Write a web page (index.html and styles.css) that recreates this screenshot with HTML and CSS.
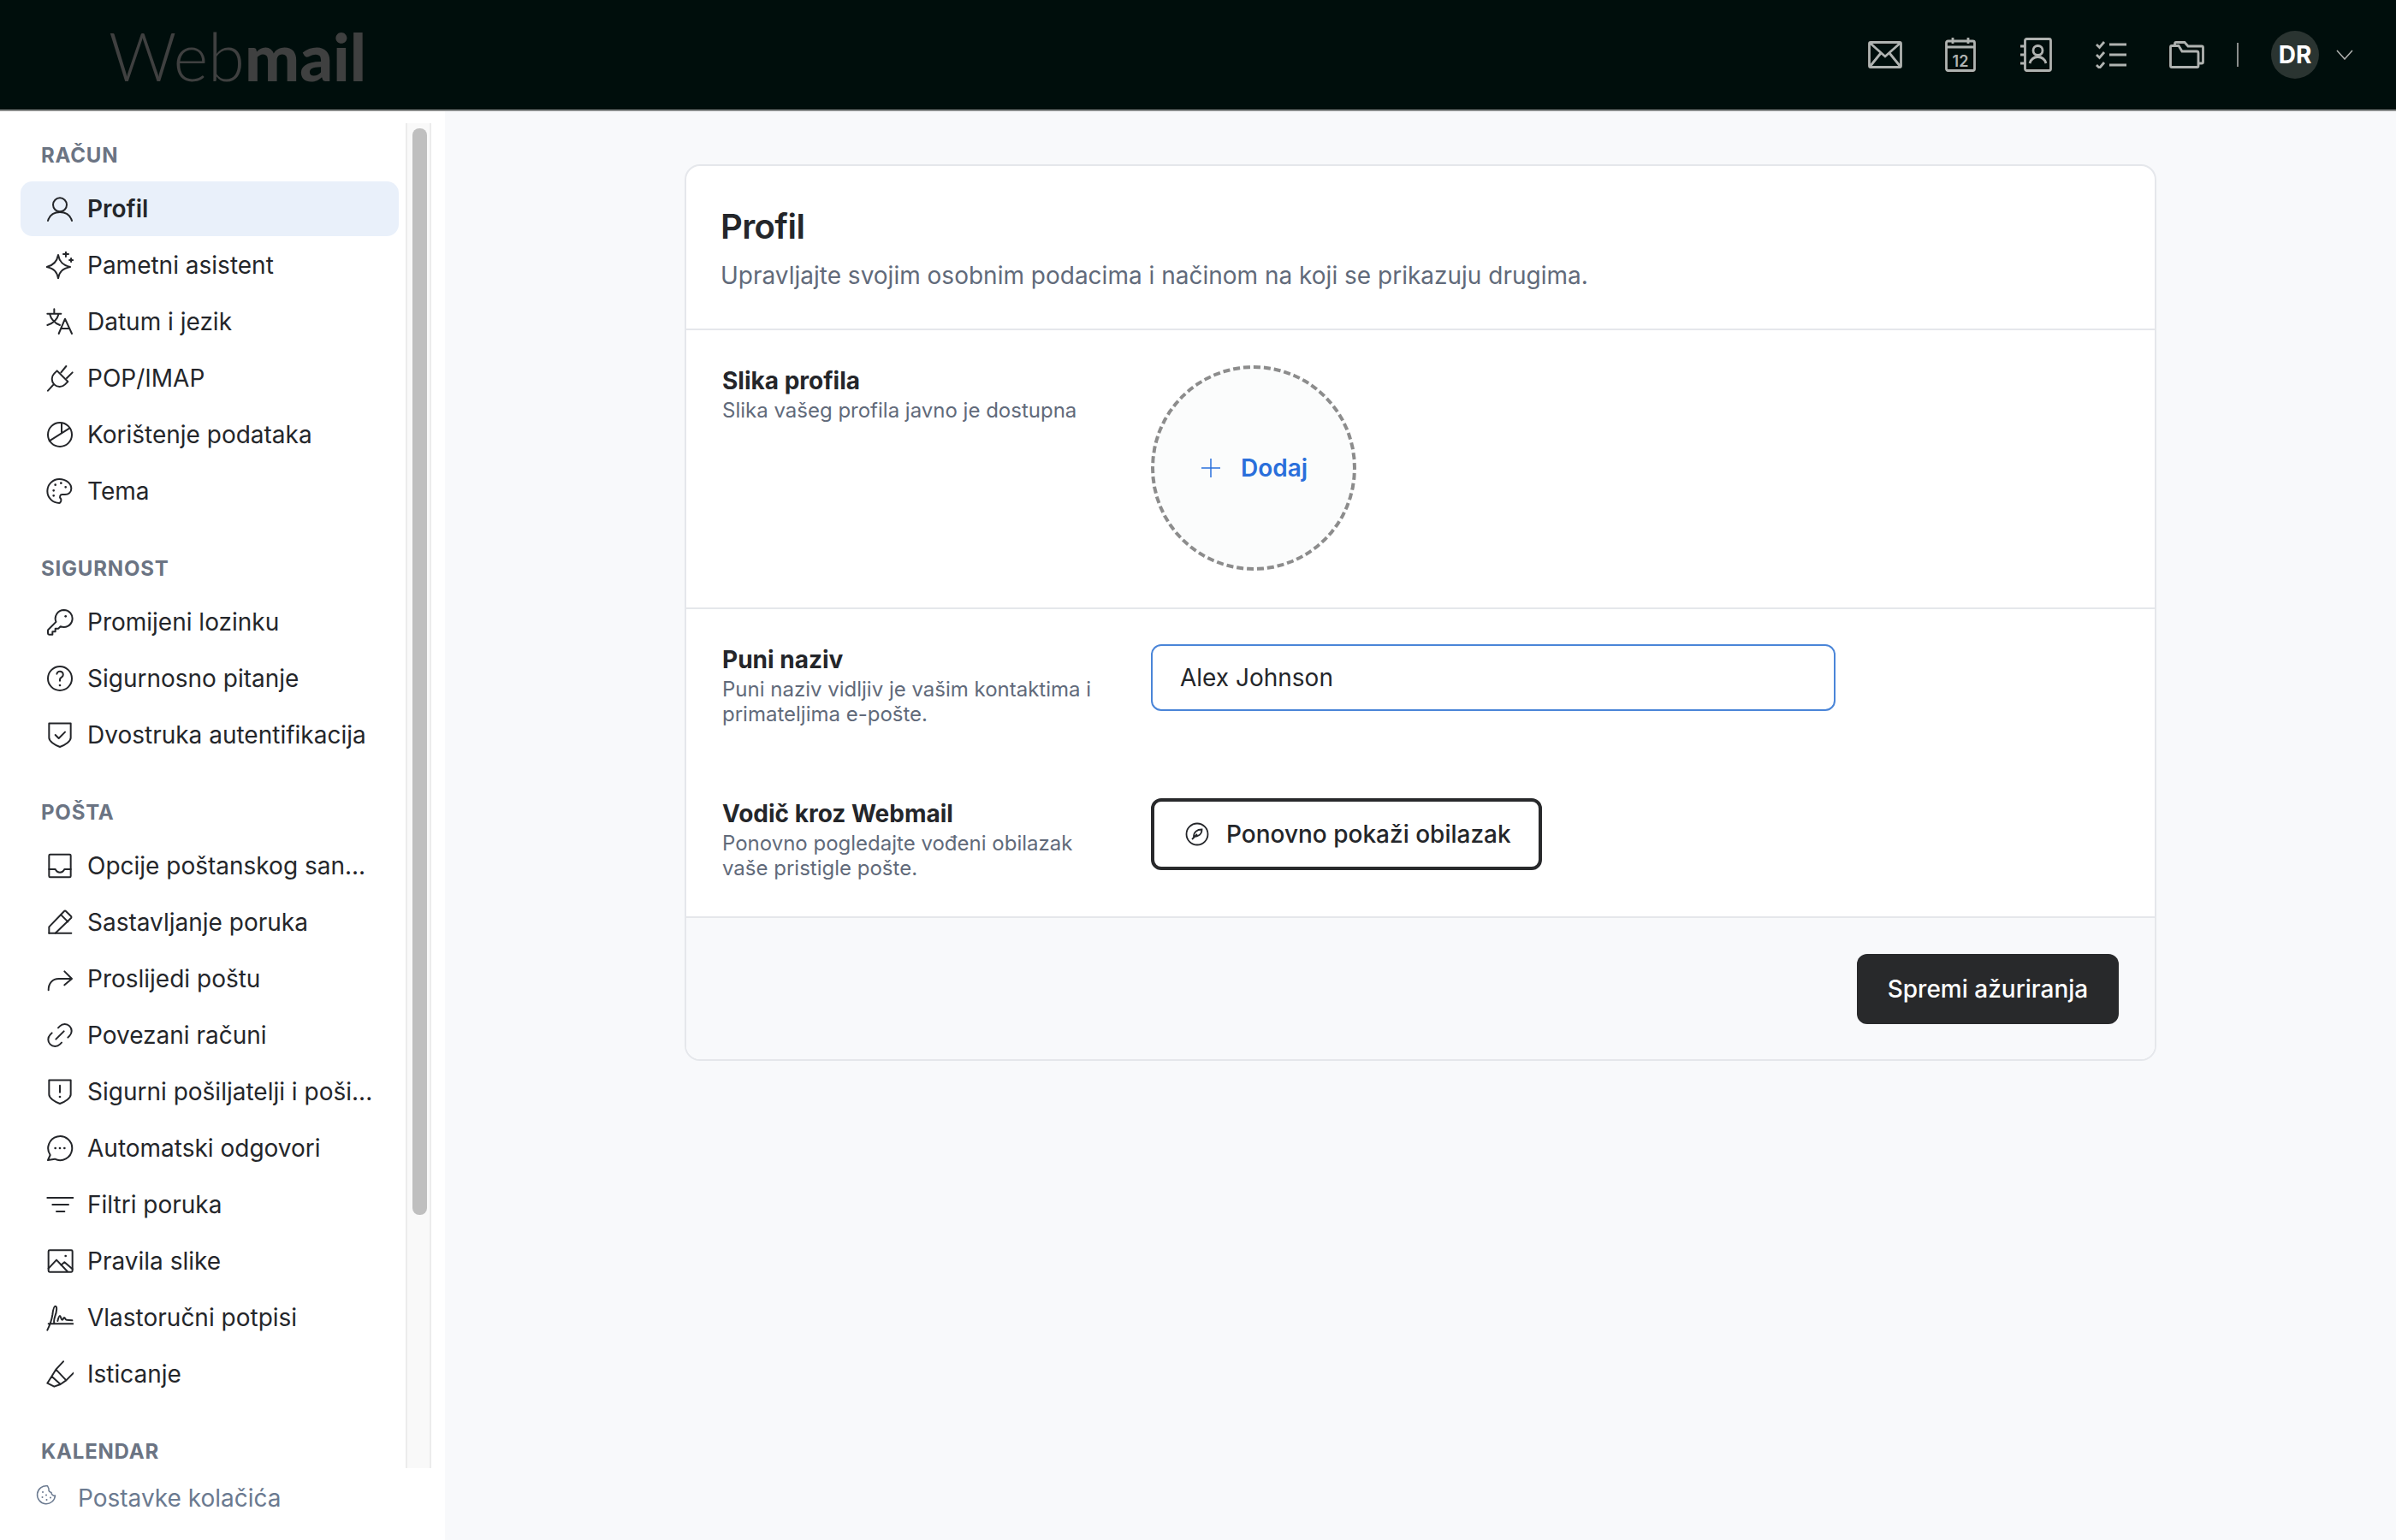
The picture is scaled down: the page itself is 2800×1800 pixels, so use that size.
FILE: index.html
```html
<!DOCTYPE html>
<html lang="hr">

<head>
  <meta charset="UTF-8">
  <title>Webmail - Profil</title>
  <link rel="stylesheet" href="styles.css">
</head>

<body>

  <header class="topbar">
    <div class="logo"><span class="logo-thin">Web</span><span class="logo-bold">mail</span></div>
    <div class="topbar-tools">
      <svg class="tool tool-mail" viewBox="0 0 40 32"><rect x="1.500" y="1.500" width="37" height="29" rx="1.500"/><path d="M2 2l18 16L38 2M2 30l13-16M38 30L25 14"/></svg>
      <svg class="tool tool-cal" viewBox="0 0 36 40"><rect x="1.500" y="4" width="33" height="34.500" rx="2"/><path d="M1.500 11h33M9 0v7M27 0v7"/><text x="18" y="33.500" class="tool-cal-text">12</text></svg>
      <svg class="tool tool-book" viewBox="0 0 38 40"><rect x="6.500" y="1.500" width="30" height="37" rx="2"/><path d="M1 10h5M1 20h5M1 30h5"/><circle cx="21.500" cy="15" r="5.500"/><path d="M12 30c1.500-5 5-7.500 9.500-7.500S29.500 25 31 30"/></svg>
      <svg class="tool tool-tasks" viewBox="0 0 36 32"><path d="M1 4l3.500 3.500L10 1M1 16l3.500 3.500L10 13M1 28l3.500 3.500L10 25"/><path d="M16 4h20M16 16h20M16 28h20"/></svg>
      <svg class="tool tool-folder" viewBox="0 0 41 32"><path d="M1.500 29V7A1.500 1.500 0 0 1 3 5.500h8l4 6.500h17a2 2 0 0 1 2 2v15a1.500 1.500 0 0 1-1.500 1.500H3A1.500 1.500 0 0 1 1.500 29z"/><path d="M6.500 5V3A1.500 1.500 0 0 1 8 1.500h10l4 4.500h16A1.500 1.500 0 0 1 39.500 7.500v17a1.500 1.500 0 0 1-1.500 1.500h-3.500"/></svg>
      <div class="topbar-divider"></div>
      <div class="avatar">DR</div>
      <svg class="tool-chevron" viewBox="0 0 20 12"><path d="M1 1l9 10 9-10"/></svg>
    </div>
  </header>

  <div class="layout">
    <aside class="sidebar">
      <div class="sidebar-body">
        <nav class="sidenav">

          <div class="nav-title">RAČUN</div>
          <ul class="nav-list">
            <li class="nav-item active">
              <svg class="icon" viewBox="0 0 24 24"><circle cx="12" cy="8.500" r="6"/><path d="M1.500 22.500c1.500-5 5-7.500 10.500-7.500s9 2.500 10.500 7.500"/></svg>
              <span>Profil</span>
            </li>
            <li class="nav-item">
              <svg class="icon" viewBox="0 0 24 24"><path d="M10.500 3c1 5.500 3.500 9 10.500 10.500-7 1.500-9.500 4.500-10.500 10-1-5.500-3.500-8.500-10-10 6.500-1.500 9-5 10-10.500z"/><path d="M17.200 0v4.500M15 2.200h4.500M21.800 6v3M20.300 7.500h3"/></svg>
              <span>Pametni asistent</span>
            </li>
            <li class="nav-item">
              <svg class="icon" viewBox="0 0 24 24"><path d="M7 1v3.500M1 5h12M3 5c1 4 4 8 9 10M11 5c-1 4-4 8-10 10M11 22.500l5.500-13 6 13M13 18h7.500"/></svg>
              <span>Datum i jezik</span>
            </li>
            <li class="nav-item">
              <svg class="icon" viewBox="0 0 24 24"><path d="M9.500 5.500l9.500 9.500-2.500 2.500a5.800 5.800 0 0 1-9.500-9.500z"/><path d="M1.500 23l5-5.500M17.500 1.500L13 7M23 7l-5 5"/></svg>
              <span>POP/IMAP</span>
            </li>
            <li class="nav-item">
              <svg class="icon" viewBox="0 0 24 24"><circle cx="12" cy="12" r="10.500"/><path d="M13.500 2v8.500M2.800 17.500l17.500-11"/></svg>
              <span>Korištenje podataka</span>
            </li>
            <li class="nav-item">
              <svg class="icon" viewBox="0 0 24 24"><path d="M11.500 22.500a10.500 10.500 0 0 1 0-21c5.800 0 10.500 3.800 10.500 8.500 0 3-2.500 5-5.500 5h-2.500a2 2 0 0 0-1.300 3.500c1 1.500 0 4-1.700 4z"/><path d="M6.500 11.500h.01M8 6.500h.01M13 5h.01M17 8.500h.01M6.500 16h.01" class="dots"/></svg>
              <span>Tema</span>
            </li>
          </ul>

          <div class="nav-title">SIGURNOST</div>
          <ul class="nav-list">
            <li class="nav-item">
              <svg class="icon" viewBox="0 0 24 24"><path d="M15.500 1.500a7.500 7.500 0 1 1-3 14.400l-2 2H8v2.500H5.500V23H2.500a1 1 0 0 1-1-1v-2.500a1 1 0 0 1 .3-.7l6.800-6.900A7.500 7.500 0 0 1 15.500 1.500z"/><path d="M17 7h.01" class="dots"/></svg>
              <span>Promijeni lozinku</span>
            </li>
            <li class="nav-item">
              <svg class="icon" viewBox="0 0 24 24"><circle cx="12" cy="12" r="10.500"/><path d="M12 18h.01" class="dots"/><path d="M12 14v-1c0-1 .6-1.500 1.400-2a2.800 2.800 0 1 0-4.100-3"/></svg>
              <span>Sigurnosno pitanje</span>
            </li>
            <li class="nav-item">
              <svg class="icon" viewBox="0 0 24 24"><path d="M2.500 1.800h19v12.700c0 3-4.500 6.300-9.500 8-5-1.700-9.500-5-9.500-8z"/><path d="M8 12l3 3 5.500-5.500"/></svg>
              <span>Dvostruka autentifikacija</span>
            </li>
          </ul>

          <div class="nav-title">POŠTA</div>
          <ul class="nav-list">
            <li class="nav-item">
              <svg class="icon" viewBox="0 0 24 24"><rect x="2.500" y="2" width="19" height="20" rx="1"/><path d="M2.500 15H8c1 2 2.200 2.800 4 2.800s3-.8 4-2.800h5.500"/></svg>
              <span>Opcije poštanskog san...</span>
            </li>
            <li class="nav-item">
              <svg class="icon" viewBox="0 0 24 24"><path d="M2.500 21.500V16L15.800 2.200a1 1 0 0 1 1.400 0l4.600 4.600a1 1 0 0 1 0 1.400L8 21.500"/><path d="M13 5.500l6 6M2.500 21.500H22"/></svg>
              <span>Sastavljanje poruka</span>
            </li>
            <li class="nav-item">
              <svg class="icon" viewBox="0 0 24 24"><path d="M2 22c0-6 3.500-10 9-10h11.500M16 5.500l6.500 6.500-6.500 5.500"/></svg>
              <span>Proslijedi poštu</span>
            </li>
            <li class="nav-item">
              <svg class="icon" viewBox="0 0 24 24"><path d="M8.500 15.500l7-7M10.500 5.500l1.500-1.500a6 6 0 0 1 8.500 8.500L19 14M13.500 18.500L12 20a6 6 0 0 1-8.500-8.500L5 10"/></svg>
              <span>Povezani računi</span>
            </li>
            <li class="nav-item">
              <svg class="icon" viewBox="0 0 24 24"><path d="M2.500 1.800h19v12.700c0 3-4.500 6.300-9.500 8-5-1.700-9.500-5-9.500-8z"/><path d="M12 6.500v6"/><path d="M12 16.500h.01" class="dots"/></svg>
              <span>Sigurni pošiljatelji i poši...</span>
            </li>
            <li class="nav-item">
              <svg class="icon" viewBox="0 0 24 24"><path d="M1.500 22.500l2-4.500A10.500 10.500 0 1 1 7.500 21.500z"/><path d="M8 12h.01M12 12h.01M16 12h.01" class="dots"/></svg>
              <span>Automatski odgovori</span>
            </li>
            <li class="nav-item">
              <svg class="icon" viewBox="0 0 24 24"><path d="M1 6h23M5.500 12h14M9 18h7"/></svg>
              <span>Filtri poruka</span>
            </li>
            <li class="nav-item">
              <svg class="icon" viewBox="0 0 24 24"><rect x="2" y="2.500" width="21" height="19" rx="1"/><path d="M2 18.500L9 11l9.500 10M13 15.500l3-2.500 7 6"/><path d="M17 7.500h.01" class="dots"/></svg>
              <span>Pravila slike</span>
            </li>
            <li class="nav-item">
              <svg class="icon" viewBox="0 0 24 24"><path d="M1 23C3.500 18 5 13 5.500 9.500 6 5 6.500 2 8 2c1.800 0 1.200 5-.3 9-.8 2.200-1 4.500-.7 6M10 15c.5-2 1.200-4.500 2-4.500s1 3.500 2 3.500 1-2 1.800-2 1 2 2 2 2 0 5 .5M2 17.500h21.500"/></svg>
              <span>Vlastoručni potpisi</span>
            </li>
            <li class="nav-item">
              <svg class="icon" viewBox="0 0 24 24"><path d="M15 1L8.500 8l9 9.500L24 11M8.500 8L4.800 14l7.700 7 5-3.500M4.800 14L1 20l6 3 5.500-2"/></svg>
              <span>Isticanje</span>
            </li>
          </ul>

          <div class="nav-title">KALENDAR</div>
        </nav>

        <div class="scroll-track">
          <div class="scroll-thumb"></div>
        </div>
      </div>

      <div class="sidebar-foot">
        <svg class="foot-icon" viewBox="0 0 24 24"><path d="M13.500 1.800l1.500 3.200a4 4 0 0 0 3 4.500 3.500 3.500 0 0 0 4.500 3.500A10.500 10.500 0 1 1 13.500 1.800z"/><path d="M8 9h.01M7.500 15h.01M12 12.500h.01M12.500 18h.01M17 15.500h.01" class="dots"/></svg>
        <span>Postavke kolačića</span>
      </div>
    </aside>

    <main class="main">
      <section class="card">
        <div class="card-head">
          <h1>Profil</h1>
          <p>Upravljajte svojim osobnim podacima i načinom na koji se prikazuju drugima.</p>
        </div>

        <div class="card-section card-section-photo">
          <div class="row">
            <div class="row-label">
              <h2>Slika profila</h2>
              <p>Slika vašeg profila javno je dostupna</p>
            </div>
            <div class="avatar-add">
              <svg class="plus" viewBox="0 0 22 22"><path d="M11 0v22M0 11h22"/></svg>
              <span>Dodaj</span>
            </div>
          </div>
        </div>

        <div class="card-section">
          <div class="row row-name">
            <div class="row-label">
              <h2>Puni naziv</h2>
              <p>Puni naziv vidljiv je vašim kontaktima i primateljima e-pošte.</p>
            </div>
            <input class="text-input" type="text" value="Alex Johnson">
          </div>
          <div class="row">
            <div class="row-label">
              <h2>Vodič kroz Webmail</h2>
              <p>Ponovno pogledajte vođeni obilazak vaše pristigle pošte.</p>
            </div>
            <button class="btn-outline">
              <svg class="compass" viewBox="0 0 28 28"><circle cx="14" cy="14" r="12.500"/><path d="M19.500 8.500c-5.500 0-9.500 3-9.500 8.500 5.500 0 9.500-3 9.500-8.500zM8 20l6-6"/></svg>
              <span>Ponovno pokaži obilazak</span>
            </button>
          </div>
        </div>

        <div class="card-foot">
          <button class="btn-save">Spremi ažuriranja</button>
        </div>
      </section>
    </main>
  </div>

</body>

</html>
```

FILE: styles.css
```css
* {
  box-sizing: border-box;
}

body {
  margin: 0;
  height: 1800px;
  overflow: hidden;
  background-color: #f8f9fb;
  color: #24262a;
  font-family: "Inter", "Liberation Sans", sans-serif;
  display: flex;
  flex-direction: column;
}

/* top bar */
.topbar {
  height: 130px;
  flex-shrink: 0;
  background-color: #000e0c;
  border-bottom: 2px solid #8a8d8c;
  display: flex;
  justify-content: space-between;
  align-items: center;
  padding: 0 50px 0 127px;
}

.logo {
  font-family: "Lato", "Liberation Sans", sans-serif;
  font-size: 76px;
  line-height: 128px;
  padding-top: 2px;
  color: #3f4040;
}

.logo-thin {
  font-size: 78px;
  font-weight: 300;
}

.logo-bold {
  font-weight: 900;
}

.topbar-tools {
  display: flex;
  align-items: center;
}

.tool {
  display: block;
  fill: none;
  stroke: #b0b3b1;
  stroke-width: 2.800;
}

.tool-mail {
  width: 40px;
  height: 32px;
  margin-right: 50px;
}

.tool-cal {
  width: 36px;
  height: 40px;
  margin-right: 51px;
}

.tool-cal-text {
  fill: #b0b3b1;
  stroke: none;
  font-size: 18px;
  font-weight: 600;
  text-anchor: middle;
}

.tool-book {
  width: 38px;
  height: 40px;
  margin-right: 51px;
}

.tool-tasks {
  width: 36px;
  height: 32px;
  margin-right: 50px;
}

.tool-folder {
  width: 41px;
  height: 32px;
  margin-right: 38px;
}

.topbar-divider {
  width: 2px;
  height: 28px;
  background-color: #8a8d8c;
  margin-right: 38px;
}

.avatar {
  width: 56px;
  height: 56px;
  border-radius: 50%;
  background-color: #2a3431;
  color: white;
  font-size: 28px;
  font-weight: 700;
  line-height: 56px;
  text-align: center;
  margin-right: 20px;
}

.tool-chevron {
  width: 20px;
  height: 12px;
  fill: none;
  stroke: #b0b3b1;
  stroke-width: 1.500;
}

/* page layout */
.layout {
  flex: 1;
  min-height: 0;
  display: flex;
}

.sidebar {
  width: 520px;
  flex-shrink: 0;
  background-color: white;
  display: flex;
  flex-direction: column;
}

.sidebar-body {
  flex: 1;
  min-height: 0;
  margin-top: 14px;
  display: flex;
}

.sidenav {
  width: 474px;
  padding: 19px 8px 0 24px;
  overflow: hidden;
}

.nav-title {
  height: 36px;
  line-height: 38px;
  padding-left: 24px;
  font-size: 24px;
  font-weight: 700;
  letter-spacing: 0.8px;
  color: #6b7483;
  margin-bottom: 13px;
}

.nav-list {
  list-style: none;
  margin: 0 0 40px;
  padding: 0;
}

.nav-item {
  height: 64px;
  margin-bottom: 2px;
  padding-left: 30px;
  border-radius: 14px;
  display: flex;
  align-items: center;
  gap: 16px;
  font-size: 28px;
  white-space: nowrap;
}

.nav-item.active {
  background-color: #e9f0fa;
  font-weight: 600;
}

.icon {
  width: 32px;
  height: 32px;
  flex-shrink: 0;
  fill: none;
  stroke: #24262a;
  stroke-width: 1.500;
  stroke-linecap: round;
  stroke-linejoin: round;
}

.dots {
  stroke-width: 2;
}

.scroll-track {
  width: 30px;
  background-color: #f9f9f9;
  border-left: 2px solid #ececec;
  border-right: 2px solid #ececec;
  padding: 6px 3px 0 6px;
}

.scroll-thumb {
  height: 1270px;
  background-color: #bfbfbf;
  border-radius: 8px;
}

.sidebar-foot {
  height: 84px;
  flex-shrink: 0;
  padding: 0 0 14px 42px;
  display: flex;
  align-items: center;
  gap: 25px;
  font-size: 28px;
  color: #6b7a90;
}

.foot-icon {
  width: 24px;
  height: 24px;
  flex-shrink: 0;
  margin-bottom: 8px;
  fill: none;
  stroke: #6b7a90;
  stroke-width: 1.500;
  stroke-linecap: round;
  stroke-linejoin: round;
}

/* main content */
.main {
  flex: 1;
  min-width: 0;
  padding: 62px 280px 0;
}

.card {
  background-color: white;
  border: 2px solid #e5e7eb;
  border-radius: 18px;
  overflow: hidden;
}

.card-head {
  height: 192px;
  padding: 45px 40px 0;
  border-bottom: 2px solid #e5e7eb;
}

.card-head h1 {
  margin: 0;
  font-size: 40px;
  line-height: 52px;
  font-weight: 600;
  letter-spacing: -0.6px;
}

.card-head p {
  margin: 11px 0 0;
  font-size: 28px;
  line-height: 40px;
  color: #616a7a;
}

.card-section {
  padding: 41px 40px 42px 42px;
  border-bottom: 2px solid #e5e7eb;
}

.card-section-photo {
  padding-bottom: 43px;
}

.row {
  display: grid;
  grid-template-columns: 460px 1fr;
  column-gap: 41px;
}

.row-name {
  height: 180px;
}

.row-label h2 {
  margin: 0 0 2px;
  font-size: 28px;
  line-height: 36px;
  font-weight: 700;
}

.row-label p {
  margin: 0;
  font-size: 24px;
  line-height: 29px;
  color: #616a7a;
}

.avatar-add {
  width: 240px;
  height: 240px;
  padding-left: 2px;
  border-radius: 50%;
  border: 4px dashed #8c8c8c;
  background-color: #fbfcfc;
  display: flex;
  justify-content: center;
  align-items: center;
  gap: 24px;
  font-size: 28px;
  font-weight: 600;
  color: #2a6fdb;
}

.plus {
  width: 22px;
  height: 22px;
  fill: none;
  stroke: #2a6fdb;
  stroke-width: 1.500;
}

.text-input {
  display: block;
  width: 800px;
  height: 78px;
  padding: 0 32px;
  border: 2px solid #4a85d8;
  border-radius: 12px;
  background-color: white;
  color: #24262a;
  font-family: inherit;
  font-size: 28px;
  outline: none;
}

.btn-outline {
  width: 457px;
  height: 84px;
  padding: 0 0 0 36px;
  border: 4px solid #28292b;
  border-radius: 12px;
  background-color: white;
  color: #24262a;
  font-family: inherit;
  font-size: 28px;
  font-weight: 500;
  display: flex;
  align-items: center;
  gap: 20px;
}

.compass {
  width: 28px;
  height: 28px;
  flex-shrink: 0;
  fill: none;
  stroke: #24262a;
  stroke-width: 1.800;
}

.card-foot {
  height: 165px;
  padding: 42px 42px 0 0;
  background-color: #f8f9fb;
  display: flex;
  justify-content: flex-end;
  align-items: flex-start;
}

.btn-save {
  width: 306px;
  height: 82px;
  border: none;
  border-radius: 12px;
  background-color: #28292b;
  color: white;
  font-family: inherit;
  font-size: 28px;
  font-weight: 500;
}
```
